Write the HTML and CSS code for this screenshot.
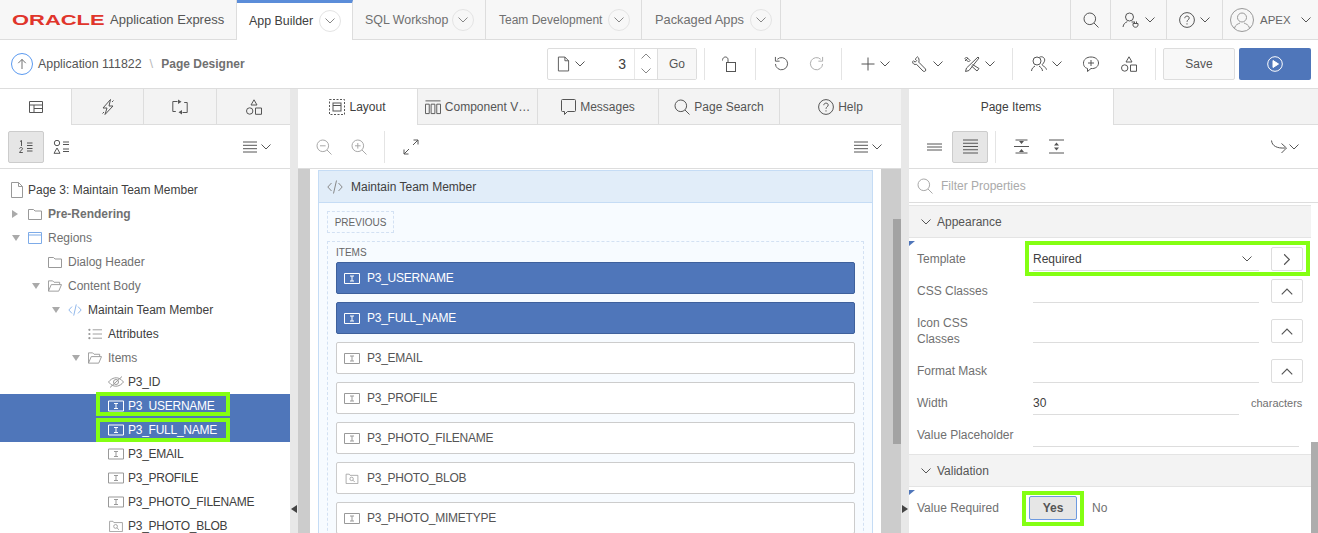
FILE: index.html
```html
<!DOCTYPE html>
<html lang="en">
<head>
    <meta charset="UTF-8">
    <title>Page Designer</title>
    <link rel="stylesheet" href="styles.css">
</head>
<body>
<svg class="defs" aria-hidden="true">
    <symbol id="i-chev" viewBox="0 0 10 6"><path d="M.5.5 5 5 9.500.5"/></symbol>
    <symbol id="i-search" viewBox="0 0 16 16"><circle cx="6.800" cy="6.800" r="5.800"/><path d="m11 11 4.500 4.500"/></symbol>
    <symbol id="i-zoomout" viewBox="0 0 16 16"><circle cx="6.800" cy="6.800" r="5.800"/><path d="m11 11 4.500 4.500M4 6.800h5.600"/></symbol>
    <symbol id="i-zoomin" viewBox="0 0 16 16"><circle cx="6.800" cy="6.800" r="5.800"/><path d="m11 11 4.500 4.500M4 6.800h5.600M6.800 4v5.600"/></symbol>
    <symbol id="i-expand" viewBox="0 0 16 16"><path d="M1 15 6 10M1 10.500V15h4.500M15 1l-5 5M10.500 1H15v4.500"/></symbol>
    <symbol id="i-help" viewBox="0 0 16 16"><circle cx="8" cy="8" r="7.400"/><path d="M5.800 6.200C5.800 3.400 10.200 3.500 10.200 6c0 1.900-2.200 1.800-2.200 3.800M8 11.300v1.200"/></symbol>
    <symbol id="i-user" viewBox="0 0 18 16"><circle cx="7.500" cy="5" r="4"/><path d="M1 15c.5-3 2-4.500 4.300-5.300M9.500 10 12 10M11 11.500h5v1.500c0 3-5 3-5 0zM12.500 9.500v2M14.500 9.500v2"/></symbol>
    <symbol id="i-avatar" viewBox="0 0 24 24"><circle cx="12" cy="12" r="11.500"/><circle cx="12" cy="9.500" r="4.500"/><path d="M4.500 20c1-3.500 3.500-4 5.500-5M19.500 20c-1-3.500-3.500-4-5.500-5"/></symbol>
    <symbol id="i-up" viewBox="0 0 24 24"><path d="M12 18V6.500M7.500 11 12 6.500l4.500 4.500"/></symbol>
    <symbol id="i-page" viewBox="0 0 14 16"><path d="M1.500.5h7l4 4v11h-11zM8.500.5v4h4"/></symbol>
    <symbol id="i-lock" viewBox="0 0 14 16"><rect x="4.500" y="6.500" width="9" height="9"/><path d="M.5 4.500C.5 0 6 0 6 3.500v3"/></symbol>
    <symbol id="i-undo" viewBox="0 0 16 16"><path d="M3.500 3.500A6.500 6.500 0 1 1 1.500 8.500M1.500 1v4.500H6"/></symbol>
    <symbol id="i-redo" viewBox="0 0 16 16"><path d="M12.500 3.500A6.500 6.500 0 1 0 14.500 8.500M14.500 1v4.500H10"/></symbol>
    <symbol id="i-plus" viewBox="0 0 14 14"><path d="M7 .5v13M.5 7h13"/></symbol>
    <symbol id="i-wrench" viewBox="0 0 16 16"><path d="M5.500.8 3.200 3.100l1.500 1.500-1.600 1.600-1.500-1.500L.6 5.800C.6 8 2.700 9 4.500 8.300l6.700 6.900c1.500 1 3.300-.7 2.300-2.200L6.800 6.200C7.500 4 6.800 1.500 5.500.8z"/></symbol>
    <symbol id="i-tools" viewBox="0 0 16 16"><path d="M1 2.500 2.500 1l3.500 3.500L4.500 6zM14 1l1 1L5 14.500l-3.500 1 1-3.500zM8.500 8.500l6.500 4-2 2.500-5.500-5M1 5l3-3"/></symbol>
    <symbol id="i-people" viewBox="0 0 16 16"><circle cx="6" cy="5" r="4"/><path d="M.5 15c.3-3 2-3.800 3.500-5M11.500 15c-.3-3-2-3.800-3.500-5M8.500 1.200c3-1.500 6 1 5 4-.4 1.300-1.300 2.300-2.300 3.500.5 2 3.300 1.300 4.300 5"/></symbol>
    <symbol id="i-comment" viewBox="0 0 16 16"><path d="M4.500 12.500C1 11.500.5 9 .5 7c0-3.500 3.200-6 7.500-6s7.500 2.500 7.500 6-3.200 6-7.500 5.500l-3.500 3zM8 4v6M5 7h6"/></symbol>
    <symbol id="i-shapes" viewBox="0 0 16 16"><path d="M8 .8 11 6H5zM9.500 9h6v6.300h-6z"/><circle cx="3.700" cy="12" r="3.200"/></symbol>
    <symbol id="i-play" viewBox="0 0 16 16"><circle cx="8" cy="8" r="7.300"/><path d="M6 4.500v7l5.500-3.500z" class="play-arrow"/></symbol>
    <symbol id="i-tree" viewBox="0 0 16 14"><path d="M1.500 1.500h13v11h-13zM1.500 5h13M6 5v7.500M6 8.500h8.500"/></symbol>
    <symbol id="i-bolt" viewBox="0 0 16 16"><path d="M10.500.5 3 9h4l-2 6.500L13 7H9z M13.500 1.500 12 3M2.500 14.500 4 13"/></symbol>
    <symbol id="i-process" viewBox="0 0 16 16"><path d="M5.500 2.500H.8v10h3M10.500 13.500h4.700v-10h-3"/><path d="M6 .5v4.500L9.500 2.700zM10 11v4.500L6.500 13.300z" class="solid"/></symbol>
    <symbol id="i-order" viewBox="0 0 18 14"><path d="M3 1.500 4.500.5V6M2.500 8.500c.5-1.500 3.500-1.200 3 .5-.3 1-2.500 1.800-3 3.500h3.300M10 3h5.500M10 5.500h5.500M10 8.500h5.500M10 11h5.500"/></symbol>
    <symbol id="i-shapelist" viewBox="0 0 18 14"><circle cx="4" cy="3" r="2.700"/><path d="M4 8l3 5.300H1zM10 2h6M10 4.500h6M10 9h6M10 11.500h6"/></symbol>
    <symbol id="i-lines4" viewBox="0 0 14 12"><path d="M0 1h14M0 4.300h14M0 7.700h14M0 11h14"/></symbol>
    <symbol id="i-lines3" viewBox="0 0 15 8"><path d="M0 1h15M0 4h15M0 7h15"/></symbol>
    <symbol id="i-lines5" viewBox="0 0 15 15"><path d="M0 1h15M0 4.250h15M0 7.500h15M0 10.750h15M0 14h15"/></symbol>
    <symbol id="i-collapse" viewBox="0 0 15 14"><path d="M0 7h15M1.500 .5h12"/><path d="M5 1.500h5L7.500 4.500zM5 12.500h5L7.500 9.500z" class="solid"/><path d="M1.500 13.500h12"/></symbol>
    <symbol id="i-spread" viewBox="0 0 15 14"><path d="M0 .5h15M0 13.500h15"/><path d="M5 6h5L7.500 3zM5 8h5L7.500 11z" class="solid"/></symbol>
    <symbol id="i-goto" viewBox="0 0 16 14"><path d="M.5.5C1 6 6 8.500 14 8M10.500 3.500l5 4.500-5 5"/></symbol>
    <symbol id="i-layout" viewBox="0 0 16 16"><rect x=".5" y=".5" width="15" height="15" stroke-dasharray="2 1.500"/><rect x="4" y="4" width="8" height="8"/><path d="M4 6.500h8"/></symbol>
    <symbol id="i-grid" viewBox="0 0 17 16"><path d="M.5 1.500h16M.5 5h4v10h-4zM6.500 5h4v10h-4zM12.500 5h4v10h-4z"/></symbol>
    <symbol id="i-bubble" viewBox="0 0 15 16"><path d="M.5 1.500A1 1 0 0 1 1.500.5h12a1 1 0 0 1 1 1v10a1 1 0 0 1-1 1H6.500l-3 3v-3h-2a1 1 0 0 1-1-1z"/></symbol>
    <symbol id="i-folder" viewBox="0 0 14 12"><path d="M.5 1.500h5l1.500 1.500h6.500v8.500H.5z"/></symbol>
    <symbol id="i-open" viewBox="0 0 15 12"><path d="M.5 11.500V.5h4.500l1.500 1.500h6v2.500M.5 11.500h11l3-7h-11z"/></symbol>
    <symbol id="i-region" viewBox="0 0 14 12"><path d="M.5.500h13v11H.5zM.5 3h13"/></symbol>
    <symbol id="i-code" viewBox="0 0 16 14"><path d="M4.500 3 .8 7l3.700 4M11.500 3l3.700 4-3.700 4M9.500.5l-3 13"/></symbol>
    <symbol id="i-attrs" viewBox="0 0 15 12"><circle cx="1.500" cy="1.500" r="1.200" class="solid"/><circle cx="1.500" cy="6" r="1.200" class="solid"/><circle cx="1.500" cy="10.500" r="1.200" class="solid"/><path d="M5 1.500h10M5 6h10M5 10.500h10"/></symbol>
    <symbol id="i-hidden" viewBox="0 0 16 12"><path d="M.5 6C4 1.500 9 .5 13 3.500l2.500 2.500C12 10.500 7 11.500 3 8.500zM14 .5 2 11.500"/><circle cx="8" cy="6" r="2.500"/></symbol>
    <symbol id="i-text" viewBox="0 0 16 11"><path d="M.5.500h15v10H.5zM6 3h4M6 8h4M8 3v5"/></symbol>
    <symbol id="i-blob" viewBox="0 0 16 14"><path d="M.5 13.500V1.500h4l1 1.500h10v10.500z"/><circle cx="7.500" cy="7.500" r="2.200"/><path d="m9 9 2.500 2.500"/></symbol>
</svg>

<div class="page">
    <header class="topbar">
        <div class="brand"><span class="brand-mark">ORACLE</span><span class="brand-name">Application Express</span></div>
        <nav class="nav">
            <div class="nav-tab nav-active">App Builder<span class="nav-chev"><svg class="ico chev"><use href="#i-chev"/></svg></span></div>
            <div class="nav-tab nav-sql">SQL Workshop<span class="nav-chev"><svg class="ico chev"><use href="#i-chev"/></svg></span></div>
            <div class="nav-tab nav-team">Team Development<span class="nav-chev"><svg class="ico chev"><use href="#i-chev"/></svg></span></div>
            <div class="nav-tab nav-apps">Packaged Apps<span class="nav-chev"><svg class="ico chev"><use href="#i-chev"/></svg></span></div>
        </nav>
        <div class="grow"></div>
        <div class="top-cell cell-search"><svg class="ico i16"><use href="#i-search"/></svg></div>
        <div class="top-cell cell-menu"><svg class="ico i-user"><use href="#i-user"/></svg><svg class="ico chev"><use href="#i-chev"/></svg></div>
        <div class="top-cell cell-menu"><svg class="ico i16"><use href="#i-help"/></svg><svg class="ico chev"><use href="#i-chev"/></svg></div>
        <div class="top-cell cell-user"><svg class="ico i-avatar"><use href="#i-avatar"/></svg><span class="user-name">APEX</span><svg class="ico chev"><use href="#i-chev"/></svg></div>
    </header>

    <div class="toolbar">
        <svg class="ico i-crumb"><use href="#i-up"/></svg>
        <span class="crumb">Application 111822</span>
        <span class="crumb-sep">\</span>
        <span class="crumb-current">Page Designer</span>
        <div class="grow"></div>
        <div class="pagebox">
            <svg class="ico i-doc"><use href="#i-page"/></svg>
            <svg class="ico chev"><use href="#i-chev"/></svg>
            <span class="pagebox-num">3</span>
            <div class="stepper"><svg class="ico chev flip"><use href="#i-chev"/></svg><svg class="ico chev"><use href="#i-chev"/></svg></div>
            <div class="go">Go</div>
        </div>
        <span class="tsep sep-first"></span>
        <div class="tbtn c50 lock-cell"><svg class="ico i-lock"><use href="#i-lock"/></svg></div>
        <span class="tsep"></span>
        <div class="tbtn c50"><svg class="ico i15"><use href="#i-undo"/></svg></div>
        <div class="tbtn c20 faded"><svg class="ico i15"><use href="#i-redo"/></svg></div>
        <div class="tbtn c15"></div>
        <span class="tsep"></span>
        <div class="tbtn c67"><svg class="ico i14"><use href="#i-plus"/></svg><svg class="ico chev"><use href="#i-chev"/></svg></div>
        <div class="tbtn c37"><svg class="ico i16"><use href="#i-wrench"/></svg><svg class="ico chev"><use href="#i-chev"/></svg></div>
        <div class="tbtn c66"><svg class="ico i16"><use href="#i-tools"/></svg><svg class="ico chev"><use href="#i-chev"/></svg></div>
        <span class="tsep"></span>
        <div class="tbtn c66"><svg class="ico i16"><use href="#i-people"/></svg><svg class="ico chev"><use href="#i-chev"/></svg></div>
        <div class="tbtn c24"><svg class="ico i16"><use href="#i-comment"/></svg></div>
        <div class="tbtn c52"><svg class="ico i16"><use href="#i-shapes"/></svg></div>
        <span class="tsep"></span>
        <div class="save">Save</div>
        <div class="run"><svg class="ico i-run"><use href="#i-play"/></svg></div>
    </div>

    <main class="panes">
        <section class="pane">
            <div class="tabs tabs-left">
                <div class="tab tab-on"><svg class="ico i16"><use href="#i-tree"/></svg></div>
                <div class="tab"><svg class="ico i16"><use href="#i-bolt"/></svg></div>
                <div class="tab"><svg class="ico i16"><use href="#i-process"/></svg></div>
                <div class="tab"><svg class="ico i16"><use href="#i-shapes"/></svg></div>
            </div>
            <div class="subbar">
                <div class="toggle toggle-on"><svg class="ico i-list"><use href="#i-order"/></svg></div>
                <div class="toggle"><svg class="ico i-list"><use href="#i-shapelist"/></svg></div>
                <div class="grow"></div>
                <svg class="ico i-menu"><use href="#i-lines4"/></svg>
                <svg class="ico chev chev-menu"><use href="#i-chev"/></svg>
            </div>
            <div class="tree">
                <div class="row lvl1 dark"><svg class="ico ti ti-page"><use href="#i-page"/></svg>Page 3: Maintain Team Member</div>
                <div class="row lvl1 strong"><span class="tw"><i class="tri tri-right"></i></span><svg class="ico ti"><use href="#i-folder"/></svg>Pre-Rendering</div>
                <div class="row lvl1"><span class="tw"><i class="tri tri-down"></i></span><svg class="ico ti blue"><use href="#i-region"/></svg>Regions</div>
                <div class="row lvl2"><span class="tw"></span><svg class="ico ti"><use href="#i-folder"/></svg>Dialog Header</div>
                <div class="row lvl2"><span class="tw"><i class="tri tri-down"></i></span><svg class="ico ti"><use href="#i-open"/></svg>Content Body</div>
                <div class="row lvl3 dark"><span class="tw"><i class="tri tri-down"></i></span><svg class="ico ti blue"><use href="#i-code"/></svg>Maintain Team Member</div>
                <div class="row lvl4 dark"><span class="tw"></span><svg class="ico ti"><use href="#i-attrs"/></svg>Attributes</div>
                <div class="row lvl4"><span class="tw"><i class="tri tri-down"></i></span><svg class="ico ti"><use href="#i-open"/></svg>Items</div>
                <div class="row lvl5 dark"><span class="tw"></span><svg class="ico ti"><use href="#i-hidden"/></svg>P3_ID</div>
                <div class="row lvl5 row-sel"><span class="tw"></span><svg class="ico ti"><use href="#i-text"/></svg>P3_USERNAME</div>
                <div class="row lvl5 row-sel"><span class="tw"></span><svg class="ico ti"><use href="#i-text"/></svg>P3_FULL_NAME</div>
                <div class="row lvl5 dark"><span class="tw"></span><svg class="ico ti"><use href="#i-text"/></svg>P3_EMAIL</div>
                <div class="row lvl5 dark"><span class="tw"></span><svg class="ico ti"><use href="#i-text"/></svg>P3_PROFILE</div>
                <div class="row lvl5 dark"><span class="tw"></span><svg class="ico ti"><use href="#i-text"/></svg>P3_PHOTO_FILENAME</div>
                <div class="row lvl5 dark"><span class="tw"></span><svg class="ico ti"><use href="#i-blob"/></svg>P3_PHOTO_BLOB</div>
            </div>
        </section>

        <div class="gutter"><i class="tri tri-left gutter-arrow"></i></div>

        <section class="pane">
            <div class="tabs tabs-center">
                <div class="tab tab-on"><svg class="ico i16"><use href="#i-layout"/></svg>Layout</div>
                <div class="tab"><svg class="ico i16"><use href="#i-grid"/></svg>Component V…</div>
                <div class="tab"><svg class="ico i-bubble"><use href="#i-bubble"/></svg>Messages</div>
                <div class="tab"><svg class="ico i16"><use href="#i-search"/></svg>Page Search</div>
                <div class="tab"><svg class="ico i16"><use href="#i-help"/></svg>Help</div>
            </div>
            <div class="subbar subbar-center">
                <svg class="ico i16 faded zoom-a"><use href="#i-zoomout"/></svg>
                <svg class="ico i16 faded zoom-b"><use href="#i-zoomin"/></svg>
                <span class="subsep"></span>
                <svg class="ico i-expand"><use href="#i-expand"/></svg>
                <div class="grow"></div>
                <svg class="ico i-menu"><use href="#i-lines4"/></svg>
                <svg class="ico chev chev-menu"><use href="#i-chev"/></svg>
            </div>
            <div class="canvas">
                <div class="sheet">
                    <div class="region">
                        <div class="region-head"><svg class="ico i-rcode"><use href="#i-code"/></svg>Maintain Team Member</div>
                        <div class="region-body">
                            <div class="slot-prev">PREVIOUS</div>
                            <div class="slot-items">
                                <div class="slot-title">ITEMS</div>
                                <div class="item item-sel"><svg class="ico i-item"><use href="#i-text"/></svg>P3_USERNAME</div>
                                <div class="item item-sel"><svg class="ico i-item"><use href="#i-text"/></svg>P3_FULL_NAME</div>
                                <div class="item"><svg class="ico i-item"><use href="#i-text"/></svg>P3_EMAIL</div>
                                <div class="item"><svg class="ico i-item"><use href="#i-text"/></svg>P3_PROFILE</div>
                                <div class="item"><svg class="ico i-item"><use href="#i-text"/></svg>P3_PHOTO_FILENAME</div>
                                <div class="item"><svg class="ico i-item"><use href="#i-blob"/></svg>P3_PHOTO_BLOB</div>
                                <div class="item"><svg class="ico i-item"><use href="#i-text"/></svg>P3_PHOTO_MIMETYPE</div>
                            </div>
                        </div>
                    </div>
                </div>
                <div class="canvas-scroll"><div class="canvas-thumb"></div></div>
            </div>
        </section>

        <div class="gutter"><i class="tri tri-right gutter-arrow dark-tri"></i></div>

        <section class="pane">
            <div class="tabs">
                <div class="tab tab-on tab-props">Page Items</div>
                <div class="tab grow"></div>
            </div>
            <div class="subbar subbar-props">
                <div class="toggle"><svg class="ico i-lines3"><use href="#i-lines3"/></svg></div>
                <div class="toggle toggle-on"><svg class="ico i-lines5"><use href="#i-lines5"/></svg></div>
                <span class="subsep"></span>
                <div class="toggle"><svg class="ico i-lines5"><use href="#i-collapse"/></svg></div>
                <div class="toggle toggle-tight"><svg class="ico i-lines5"><use href="#i-spread"/></svg></div>
                <div class="grow"></div>
                <svg class="ico i-goto"><use href="#i-goto"/></svg>
                <svg class="ico chev chev-goto"><use href="#i-chev"/></svg>
            </div>
            <div class="filter"><svg class="ico i16 faded"><use href="#i-search"/></svg>Filter Properties</div>
            <div class="props-wrap">
                <div class="props">
                    <div class="group"><svg class="ico chev"><use href="#i-chev"/></svg>Appearance</div>
                    <div class="prop prop-first marked">
                        <span class="prop-label">Template</span>
                        <div class="field field-select">Required<svg class="ico chev"><use href="#i-chev"/></svg></div>
                        <div class="pick"><svg class="ico chev turn"><use href="#i-chev"/></svg></div>
                    </div>
                    <div class="prop">
                        <span class="prop-label">CSS Classes</span>
                        <div class="field"></div>
                        <div class="pick"><svg class="ico chev flip"><use href="#i-chev"/></svg></div>
                    </div>
                    <div class="prop prop-tall">
                        <span class="prop-label">Icon CSS<br>Classes</span>
                        <div class="field"></div>
                        <div class="pick"><svg class="ico chev flip"><use href="#i-chev"/></svg></div>
                    </div>
                    <div class="prop">
                        <span class="prop-label">Format Mask</span>
                        <div class="field"></div>
                        <div class="pick"><svg class="ico chev flip"><use href="#i-chev"/></svg></div>
                    </div>
                    <div class="prop">
                        <span class="prop-label">Width</span>
                        <div class="field field-short">30</div>
                        <span class="unit">characters</span>
                    </div>
                    <div class="prop prop-last">
                        <span class="prop-label">Value Placeholder</span>
                        <div class="field field-long"></div>
                    </div>
                    <div class="group"><svg class="ico chev"><use href="#i-chev"/></svg>Validation</div>
                    <div class="prop prop-yes marked">
                        <span class="prop-label">Value Required</span>
                        <div class="yes">Yes</div>
                        <span class="no">No</span>
                    </div>
                </div>
                <div class="props-scroll"><div class="props-thumb"></div></div>
            </div>
        </section>
    </main>

    <!-- green annotation boxes drawn over the screenshot -->
    <div class="mark mark-user"></div>
    <div class="mark mark-full"></div>
    <div class="mark mark-template"></div>
    <div class="mark mark-yes"></div>
</div>
</body>
</html>
```

FILE: styles.css
```css
* {
    box-sizing: border-box;
}

body {
    margin: 0;
    font-family: "Liberation Sans", Arial, sans-serif;
    font-size: 12px;
    color: #404040;
    background: #fff;
}

.defs {
    display: none;
}

.page {
    position: relative;
    height: 100vh;
    display: flex;
    flex-direction: column;
    overflow: hidden;
}

.grow {
    flex: 1;
}

.ico {
    flex: none;
    display: block;
    fill: none;
    stroke: currentColor;
    stroke-width: 1;
    color: #555;
}

.solid {
    fill: currentColor;
    stroke: none;
}

.faded {
    opacity: .5;
}

.i14 { width: 14px; height: 14px; }
.i15 { width: 15px; height: 15px; }
.i16 { width: 16px; height: 16px; }

.chev {
    width: 10px;
    height: 6px;
}

.flip {
    transform: rotate(180deg);
}

.turn {
    transform: rotate(-90deg);
}

/* top bar */
.topbar {
    height: 40px;
    flex: none;
    display: flex;
    background: #f7f7f7;
    border-bottom: 1px solid #ddd;
}

.brand {
    width: 237px;
    flex: none;
    display: flex;
    align-items: center;
    padding-left: 12px;
    border-right: 1px solid #ddd;
}

.brand-mark {
    display: inline-block;
    width: 98px;
    color: #e0352b;
    font-size: 16px;
    font-weight: bold;
    transform: scaleX(1.37) scaleY(.95);
    transform-origin: left center;
}

.brand-name {
    font-size: 13px;
    color: #555;
}

.nav {
    display: flex;
}

.nav-tab {
    display: flex;
    align-items: center;
    padding-left: 12px;
    color: #707070;
    border-right: 1px solid #ddd;
    height: 39px;
    font-size: 12.400px;
}

.nav-active {
    width: 116px;
    height: 40px;
    background: #fff;
    color: #404040;
    border-top: 3px solid #5b8dd9;
    padding-bottom: 1px;
}

.nav-sql { width: 133px; }

.nav-team {
    width: 156px;
    padding-left: 13px;
    font-size: 12px;
}

.nav-apps {
    width: 139px;
    padding-left: 13px;
    font-size: 12.800px;
}

.nav-chev {
    width: 22px;
    height: 22px;
    margin-left: 6px;
    border: 1px solid #e4e4e4;
    border-radius: 50%;
    display: flex;
    align-items: center;
    justify-content: center;
}

.nav-chev .ico {
    color: #888;
}

.nav-sql .nav-chev { margin-left: 4px; }

.top-cell {
    display: flex;
    align-items: center;
    justify-content: center;
    border-left: 1px solid #ddd;
    gap: 5px;
}

.cell-search { width: 40px; }
.cell-menu { width: 56px; }

.cell-user {
    width: 96px;
    justify-content: flex-start;
    padding-left: 7px;
    gap: 0;
}

.i-user {
    width: 18px;
    height: 16px;
}

.i-avatar {
    width: 24px;
    height: 24px;
    color: #999;
}

.user-name {
    margin: 0 10px 0 6px;
    font-size: 11.500px;
    color: #666;
}

/* second bar */
.toolbar {
    height: 49px;
    flex: none;
    display: flex;
    align-items: center;
    padding: 0 7px 1px 11px;
    border-bottom: 1px solid #ddd;
}

.i-crumb {
    width: 22px;
    height: 22px;
    border: 1px solid #5b9af0;
    border-radius: 50%;
    margin-right: 5px;
}

.crumb {
    font-size: 12.400px;
    color: #555;
}

.crumb-sep {
    margin: 0 8px;
    color: #bbb;
    font-size: 13px;
}

.crumb-current {
    font-weight: bold;
    color: #707070;
}

.pagebox {
    width: 150px;
    height: 32px;
    display: flex;
    align-items: center;
    padding-left: 9px;
    border: 1px solid #ddd;
    border-radius: 2px;
}

.i-doc {
    width: 13px;
    height: 16px;
    margin-right: 5px;
}

.pagebox-num {
    flex: 1;
    text-align: right;
    padding-right: 8px;
    font-size: 14px;
}

.stepper {
    width: 23px;
    height: 30px;
    display: flex;
    flex-direction: column;
    align-items: center;
    justify-content: center;
    gap: 9px;
    border-left: 1px solid #e8e8e8;
}

.stepper .ico {
    color: #888;
}

.go {
    width: 39px;
    height: 30px;
    display: flex;
    align-items: center;
    justify-content: center;
    background: #f7f7f7;
    border-left: 1px solid #ddd;
    color: #555;
}

.tsep {
    width: 1px;
    height: 32px;
    flex: none;
    background: #e4e4e4;
}

.sep-first {
    margin-left: 7px;
}

.tbtn {
    height: 32px;
    flex: none;
    display: flex;
    align-items: center;
    justify-content: center;
    gap: 5px;
}

.c15 { width: 15px; }
.c20 { width: 20px; }
.c24 { width: 24px; }
.c37 { width: 37px; }
.c50 { width: 50px; }
.c52 { width: 52px; }
.c66 { width: 66px; }
.c67 { width: 67px; }

.lock-cell {
    padding-right: 3px;
}

.i-lock {
    width: 14px;
    height: 16px;
}

.save {
    width: 72px;
    height: 32px;
    margin-left: 7px;
    display: flex;
    align-items: center;
    justify-content: center;
    background: #f8f8f8;
    border: 1px solid #ddd;
    border-radius: 2px;
    color: #555;
}

.run {
    width: 72px;
    height: 32px;
    margin-left: 4px;
    display: flex;
    align-items: center;
    justify-content: center;
    background: #4f76ba;
    border-radius: 2px;
}

.i-run {
    width: 16px;
    height: 16px;
    color: #fff;
}

.play-arrow {
    fill: currentColor;
}

/* panes */
.panes {
    flex: 1;
    min-height: 0;
    display: grid;
    grid-template-columns: 290px 8px 603px 8px 409px;
}

.pane {
    min-width: 0;
    display: flex;
    flex-direction: column;
}

.gutter {
    position: relative;
    background: #e8e8e8;
}

.gutter-arrow {
    position: absolute;
    left: 1px;
    top: 416px;
}

.tabs {
    height: 36px;
    flex: none;
    display: flex;
    background: #f3f3f3;
    border-bottom: 1px solid #ddd;
}

.tab {
    flex: 1;
    min-width: 0;
    display: flex;
    align-items: center;
    justify-content: center;
    gap: 4px;
    white-space: nowrap;
    border-right: 1px solid #ddd;
    color: #555;
}

.tab:last-child {
    border-right: 0;
}

.tabs-left .tab {
    flex: none;
    width: 72px;
}

.tabs-left .tab:nth-child(n+3) {
    width: 73px;
}

.tabs-center .tab {
    flex: none;
    width: 120px;
}

.tabs-center .tab:nth-child(n+3) {
    width: 121px;
}

.tab-on {
    background: #fff;
    height: 36px;
    color: #404040;
}

.tab-props {
    flex: none;
    width: 205px;
}

.subbar {
    height: 44px;
    flex: none;
    display: flex;
    align-items: center;
    padding: 0 19px 0 8px;
    border-bottom: 1px solid #ddd;
}

.toggle {
    width: 36px;
    height: 32px;
    display: flex;
    align-items: center;
    justify-content: center;
    border: 1px solid transparent;
    border-radius: 2px;
}

.toggle-on {
    background: #e6e6e6;
    border-color: #ccc;
}

.toggle-tight {
    margin-left: -1px;
}

.i-list {
    width: 18px;
    height: 14px;
}

.i-menu {
    width: 14px;
    height: 12px;
}

.i-bubble {
    width: 15px;
    height: 16px;
}

.chev-menu {
    margin-left: 4px;
}

.subbar-center {
    padding-right: 19px;
    padding-left: 18px;
}

.zoom-a {
    margin-right: 19px;
}

.zoom-b {
    margin-right: 17px;
}

.subsep {
    width: 1px;
    height: 32px;
    background: #e4e4e4;
}

.i-expand {
    width: 16px;
    height: 16px;
    margin-left: 18px;
}

.subbar-props {
    padding-left: 7px;
    padding-right: 19px;
}

.subbar-props .subsep {
    margin: 0 7px;
}

.i-lines3 {
    width: 15px;
    height: 8px;
}

.i-lines5 {
    width: 15px;
    height: 15px;
}

.i-goto {
    width: 16px;
    height: 14px;
}

.chev-goto {
    margin-left: 2px;
}

/* tree */
.tree {
    flex: 1;
    padding-top: 9px;
    overflow: hidden;
}

.row {
    height: 24px;
    display: flex;
    align-items: center;
    white-space: nowrap;
    color: #707070;
}

.lvl1 { padding-left: 8px; }
.lvl2 { padding-left: 28px; }
.lvl3 { padding-left: 48px; }
.lvl4 { padding-left: 68px; }

.lvl5 {
    padding-left: 88px;
    letter-spacing: -.25px;
}

.dark {
    color: #404040;
}

.strong {
    font-weight: bold;
}

.row-sel {
    background: #4f76ba;
    color: #fff;
}

.row-sel .ti {
    color: #fff;
}

.tw {
    width: 20px;
    flex: none;
    padding-left: 4px;
}

.ti {
    width: 14px;
    height: 12px;
    margin-right: 6px;
    color: #999;
}

.lvl5 .ti {
    width: 16px;
    margin-right: 4px;
}

.ti-page {
    width: 14px;
    height: 16px;
    margin-left: 2px;
    margin-right: 4px;
}

.blue {
    color: #7dabe8;
}

.tri {
    display: block;
    width: 0;
    height: 0;
    border-style: solid;
    border-color: transparent;
}

.tri-right {
    border-width: 4px 0 4px 6px;
    border-left-color: #aaa;
}

.tri-left {
    border-width: 4px 6px 4px 0;
    border-right-color: #444;
}

.tri-down {
    border-width: 6px 4px 0 4px;
    border-top-color: #aaa;
}

.dark-tri {
    border-left-color: #444;
}

/* canvas */
.canvas {
    flex: 1;
    min-height: 0;
    display: flex;
    padding-left: 12px;
    background: #ccc;
}

.sheet {
    width: 571px;
    flex: none;
    padding: 1px 8px 0;
    background: #fff;
    overflow: hidden;
}

.region {
    border: 1px solid #c5dcf5;
    background: #f7fbff;
    height: 600px;
}

.region-head {
    height: 32px;
    display: flex;
    align-items: center;
    padding-left: 8px;
    background: #e1edf9;
    border-bottom: 1px solid #c5dcf5;
}

.i-rcode {
    width: 16px;
    height: 14px;
    margin-right: 8px;
    color: #888;
}

.region-body {
    padding: 8px;
}

.slot-prev {
    width: 67px;
    height: 22px;
    display: flex;
    align-items: center;
    justify-content: center;
    border: 1px dashed #d3e1f3;
    font-size: 10px;
    color: #666;
}

.slot-items {
    margin-top: 8px;
    padding: 5px 8px 8px;
    border: 1px dashed #d3e1f3;
}

.slot-title {
    height: 15px;
    font-size: 10px;
    line-height: 12px;
    color: #666;
}

.item {
    height: 32px;
    margin-bottom: 8px;
    display: flex;
    align-items: center;
    padding-left: 7px;
    background: #fff;
    border: 1px solid #ccc;
    border-radius: 2px;
    letter-spacing: -.25px;
    color: #555;
}

.item-sel {
    background: #4f76ba;
    border-color: #3e609c;
    color: #fff;
}

.item-sel .ico {
    color: #fff;
}

.i-item {
    width: 16px;
    height: 11px;
    margin-right: 7px;
    color: #999;
}

.canvas-scroll {
    flex: 1;
    padding: 50px 0 0 12px;
}

.canvas-thumb {
    height: 225px;
    background: #a3a3a3;
}

/* property editor */
.filter {
    height: 34px;
    flex: none;
    display: flex;
    align-items: center;
    gap: 8px;
    padding-left: 8px;
    color: #aaa;
    border-bottom: 1px solid #ddd;
}

.props-wrap {
    flex: 1;
    min-height: 0;
    display: flex;
    padding-top: 2px;
}

.props {
    width: 402px;
    flex: none;
}

.props-scroll {
    flex: 1;
    padding-top: 237px;
}

.props-thumb {
    height: 200px;
    background: #adadad;
}

.group {
    height: 33px;
    display: flex;
    align-items: center;
    gap: 6px;
    padding-left: 12px;
    background: #f3f3f3;
    border-top: 1px solid #e4e4e4;
    border-bottom: 1px solid #e4e4e4;
    color: #555;
}

.prop {
    position: relative;
    height: 32px;
    display: flex;
    align-items: center;
    padding-left: 8px;
    color: #707070;
}

.prop-first {
    margin-top: 4px;
}

.prop-tall {
    height: 48px;
}

.prop-last {
    margin-bottom: 4px;
}

.prop-yes {
    margin-top: 4px;
}

.marked::before {
    content: "";
    position: absolute;
    left: 0;
    top: -1px;
    border-style: solid;
    border-width: 5px 6px 0 0;
    border-color: #4f76ba transparent transparent transparent;
}

.prop-label {
    width: 116px;
    flex: none;
    margin-top: 2px;
    line-height: 16px;
}

.field {
    width: 226px;
    height: 24px;
    margin-top: 2px;
    display: flex;
    align-items: center;
    border-bottom: 1px solid #ddd;
    color: #404040;
}

.field-select {
    justify-content: space-between;
    padding-right: 7px;
}

.field-short {
    width: 206px;
}

.field-long {
    width: 266px;
}

.pick {
    width: 32px;
    height: 24px;
    margin: 2px 0 0 12px;
    display: flex;
    align-items: center;
    justify-content: center;
    border: 1px solid #ddd;
    border-radius: 2px;
}

.pick .chev {
    width: 12px;
    height: 7px;
}

.unit {
    margin: 2px 0 0 12px;
    font-size: 11px;
}

.yes {
    width: 48px;
    height: 24px;
    margin: 2px 0 0 -4px;
    display: flex;
    align-items: center;
    justify-content: center;
    background: #e6e6e6;
    border: 1px solid #6d9ae0;
    border-radius: 2px;
    font-weight: bold;
    color: #555;
}

.no {
    margin: 2px 0 0 15px;
}

/* green annotation boxes */
.mark {
    position: absolute;
    border: 4px solid #84ff12;
    pointer-events: none;
}

.mark-user {
    left: 96px;
    top: 392px;
    width: 134px;
    height: 24px;
}

.mark-full {
    left: 96px;
    top: 418px;
    width: 134px;
    height: 24px;
}

.mark-template {
    left: 1025px;
    top: 241px;
    width: 285px;
    height: 35px;
}

.mark-yes {
    left: 1022px;
    top: 491px;
    width: 62px;
    height: 35px;
}
```
